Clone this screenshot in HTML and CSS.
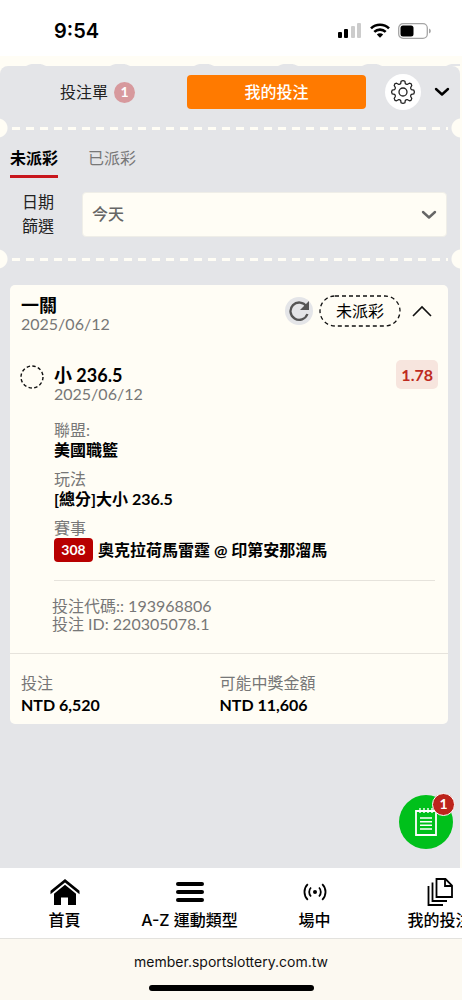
FILE: index.html
```html
<!DOCTYPE html>
<html lang="zh-Hant">
<head>
    <meta charset="UTF-8">
    <meta name="viewport" content="width=device-width, initial-scale=1.0">
    <title>我的投注</title>
    <link rel="stylesheet" href="styles.css">
</head>
<body>

<header class="status-bar">
    <span class="clock">9:54</span>
    <div class="status-icons">
        <svg width="24" height="16" viewBox="0 0 24 16">
            <rect x="0" y="9" width="4" height="6" rx="1"/>
            <rect x="6" y="6" width="4" height="9" rx="1"/>
            <rect x="13" y="3" width="4" height="12" rx="1" fill="#ccc"/>
            <rect x="19" y="0" width="4" height="15" rx="1" fill="#ccc"/>
        </svg>
        <svg width="20" height="16" viewBox="0 0 20 16">
            <g fill="none" stroke="#000" stroke-width="2.6">
                <path d="M1 5.4a13 13 0 0 1 18 0"/>
                <path d="M4.3 8.9a8.2 8.2 0 0 1 11.4 0"/>
            </g>
            <path d="M10 14.8 6.8 11.6a4.6 4.6 0 0 1 6.4 0z"/>
        </svg>
        <svg width="33" height="16" viewBox="0 0 33 16">
            <rect x=".7" y=".7" width="28.6" height="14.6" rx="4.4" fill="#fff" stroke="#a5a5a5" stroke-width="1.3"/>
            <rect x="2.5" y="2.5" width="13" height="11" rx="2.5"/>
            <path d="M31 5.5a2.6 2.6 0 0 1 0 5z" fill="#a5a5a5"/>
        </svg>
    </div>
</header>

<main class="page">
    <div class="panel">
        <div class="top-bar">
            <button type="button" class="top-tab">投注單 <span class="count">1</span></button>
            <button type="button" class="top-tab active">我的投注</button>
            <button type="button" class="icon-button settings" aria-label="設定">
                <svg width="26" height="26" viewBox="0 0 26 26" fill="none" stroke="#222" stroke-width="1.3" stroke-linejoin="round">
                    <path d="M11.1 2.2Q13 1 14.9 2.2L15.3 4.5Q16.2 5.6 17.5 5.3L19.5 4.2Q21.6 4.4 21.8 6.5L20.7 8.5Q20.4 9.8 21.5 10.7L23.8 11.1Q25 13 23.8 14.9L21.5 15.3Q20.4 16.2 20.7 17.5L21.8 19.5Q21.6 21.6 19.5 21.8L17.5 20.7Q16.2 20.4 15.3 21.5L14.9 23.8Q13 25 11.1 23.8L10.7 21.5Q9.8 20.4 8.5 20.7L6.5 21.8Q4.4 21.6 4.2 19.5L5.3 17.5Q5.6 16.2 4.5 15.3L2.2 14.9Q1 13 2.2 11.1L4.5 10.7Q5.6 9.8 5.3 8.5L4.2 6.5Q4.4 4.4 6.5 4.2L8.5 5.3Q9.8 5.6 10.7 4.5Z"/>
                    <circle cx="13" cy="13" r="4"/>
                </svg>
            </button>
            <button type="button" class="icon-button" aria-label="收合">
                <svg width="16" height="10" viewBox="0 0 16 10" fill="none" stroke="#000" stroke-width="2.4" stroke-linecap="round" stroke-linejoin="round">
                    <path d="M2 2l6 5.5L14 2"/>
                </svg>
            </button>
        </div>

        <div class="perforation"></div>

        <div class="tabs">
            <button type="button" class="tab active">未派彩</button>
            <button type="button" class="tab">已派彩</button>
        </div>

        <div class="filter">
            <label for="dateFilter">日期<br>篩選</label>
            <div class="select-box">
                <select id="dateFilter">
                    <option>今天</option>
                </select>
                <svg class="select-arrow" width="16" height="10" viewBox="0 0 16 10" fill="none" stroke="#666" stroke-width="2.4" stroke-linecap="round" stroke-linejoin="round">
                    <path d="M2 2l6 5.5L14 2"/>
                </svg>
            </div>
        </div>

        <div class="perforation"></div>

        <article class="bet-card">
            <div class="bet-header">
                <div class="bet-title">
                    <h2>一關</h2>
                    <p class="muted">2025/06/12</p>
                </div>
                <div class="bet-actions">
                    <button type="button" class="icon-button refresh" aria-label="重新整理">
                        <svg width="22" height="22" viewBox="0 0 22 22">
                            <path d="M18.5 6.5A8.7 8.7 0 1 0 19.4 14" fill="none" stroke="#555" stroke-width="2.3"/>
                            <path d="M21 1v9h-9z" fill="#555"/>
                        </svg>
                    </button>
                    <span class="bet-status">
                        <svg class="pill" width="82" height="32" viewBox="0 0 82 32">
                            <rect x="1" y="1" width="80" height="30" rx="15" fill="none" stroke="#111" stroke-width="1.3" stroke-dasharray="4 3"/>
                        </svg>
                        未派彩
                    </span>
                    <button type="button" class="icon-button" aria-label="收起">
                        <svg width="20" height="12" viewBox="0 0 20 12" fill="none" stroke="#111" stroke-width="1.6">
                            <path d="M1 11l9-9 9 9"/>
                        </svg>
                    </button>
                </div>
            </div>

            <div class="selection">
                <svg class="selection-dot" width="24" height="24" viewBox="0 0 24 24">
                    <circle cx="12" cy="12" r="11" fill="none" stroke="#111" stroke-width="1.4" stroke-dasharray="3.4 2.36"/>
                </svg>
                <div class="selection-body">
                    <div class="selection-head">
                        <div class="selection-name">
                            <h3>小 236.5</h3>
                            <p class="muted">2025/06/12</p>
                        </div>
                        <span class="odds">1.78</span>
                    </div>
                    <dl class="details">
                        <dt>聯盟:</dt>
                        <dd>美國職籃</dd>
                        <dt>玩法</dt>
                        <dd>[總分]大小 236.5</dd>
                        <dt>賽事</dt>
                        <dd class="match"><span class="match-code">308</span>奧克拉荷馬雷霆 @ 印第安那溜馬</dd>
                    </dl>
                </div>
            </div>

            <div class="bet-ids">
                <p>投注代碼:: 193968806</p>
                <p>投注 ID: 220305078.1</p>
            </div>

            <div class="totals">
                <div>
                    <p class="total-label">投注</p>
                    <p class="total-value">NTD 6,520</p>
                </div>
                <div>
                    <p class="total-label">可能中獎金額</p>
                    <p class="total-value">NTD 11,606</p>
                </div>
            </div>
        </article>
    </div>

    <button type="button" class="slip-button" aria-label="投注單">
        <svg width="24" height="30" viewBox="0 0 24 30" fill="none" stroke="#fff" stroke-width="1.8">
            <path d="M2 4h20v24H2z"/>
            <path d="M6 1v5M10 1v5M14 1v5M18 1v5" stroke-width="1.4"/>
            <path d="M6 11h12M6 14.7h12M6 18.3h12M6 22h12" stroke-width="1.6"/>
        </svg>
        <span class="slip-count">1</span>
    </button>
</main>

<nav class="bottom-nav">
    <a href="#" class="nav-item">
        <svg width="30" height="28" viewBox="0 0 30 28">
            <path d="M15 1 .5 12.8v3.4L15 4.6l14.5 11.6v-3.4z"/>
            <path d="M15 6.8 4 15.8V27h7v-7.5h7V27h8V15.8z"/>
        </svg>
        首頁
    </a>
    <a href="#" class="nav-item">
        <svg width="30" height="28" viewBox="0 0 30 28">
            <rect x="1" y="4" width="28" height="4" rx="2"/>
            <rect x="1" y="12" width="28" height="4" rx="2"/>
            <rect x="1" y="20" width="28" height="4" rx="2"/>
        </svg>
        A-Z 運動類型
    </a>
    <a href="#" class="nav-item">
        <svg width="30" height="28" viewBox="0 0 30 28" fill="none" stroke="#000" stroke-width="1.8">
            <circle cx="15" cy="14" r="2" fill="#000" stroke="none"/>
            <path d="M11 9.5a6.5 6.5 0 0 0 0 9M19 9.5a6.5 6.5 0 0 1 0 9M7.8 6.2a10.8 10.8 0 0 0 0 15.6M22.2 6.2a10.8 10.8 0 0 1 0 15.6"/>
        </svg>
        場中
    </a>
    <a href="#" class="nav-item">
        <svg width="30" height="28" viewBox="0 0 30 28" fill="none" stroke="#000" stroke-width="1.8">
            <path d="M11.5 1h9l6.5 6.5V19H11.5z"/>
            <path d="M20 1v7h7"/>
            <path d="M7.5 4.5V23H22M3.5 8v19H18"/>
        </svg>
        我的投注
    </a>
</nav>

<footer class="browser-bar">
    <span>member.sportslottery.com.tw</span>
    <div class="home-indicator"></div>
</footer>

</body>
</html>
```

FILE: styles.css
```css
* {
    box-sizing: border-box;
}
body {
    font-family: Lato, "Noto Sans CJK TC", sans-serif;
    font-size: 16px;
    line-height: 20px;
    margin: 0;
    min-height: 100vh;
    display: flex;
    flex-direction: column;
    color: #000;
    background-color: #fffdf5;
    overflow-x: hidden;
}
h2, h3, p, dl, dd {
    margin: 0;
}
button {
    font: inherit;
    color: inherit;
    padding: 0;
    border: none;
    background: none;
    cursor: pointer;
}
svg {
    display: block;
    flex: none;
}

/* status bar */
.status-bar {
    height: 56px;
    padding: 6px 31px 0 54px;
    display: flex;
    justify-content: space-between;
    align-items: center;
    background-color: white;
}
.clock {
    font-family: Inter, sans-serif;
    font-size: 20px;
    font-weight: 600;
}
.status-icons {
    display: flex;
    gap: 8px;
}

/* page */
.page {
    flex: 1;
    display: flex;
    position: relative;
    padding: 8px 2px 0 0;
}
.panel {
    flex: 1;
    min-width: 0;
    margin-top: 2px;
    border-radius: 8px 8px 0 0;
    background-color: #e4e5e8;
}
.page::before {
    content: "";
    position: absolute;
    top: 8px;
    left: 0;
    right: 2px;
    height: 2px;
    background: radial-gradient(circle at 36px 20px, #e4e5e8 20px, transparent 21px) 0 0 / 84px 40px repeat-x;
}
.top-bar {
    display: flex;
    align-items: center;
    padding: 8px 10px 8px 8px;
}
.top-tab {
    flex: 1;
    height: 34px;
    display: flex;
    justify-content: center;
    align-items: center;
    gap: 6px;
    color: #222;
}
.top-tab.active {
    border-radius: 4px;
    background-color: #ff7a00;
    color: white;
    font-weight: 500;
}
.count {
    width: 21px;
    height: 21px;
    border-radius: 50%;
    background-color: #d7999d;
    color: white;
    font-size: 14px;
    font-weight: bold;
}
.icon-button {
    display: flex;
    justify-content: center;
    align-items: center;
}
.settings {
    width: 36px;
    height: 36px;
    margin: 0 13px 0 19px;
    border-radius: 50%;
    background-color: white;
}

/* ticket edge: dashed line with a notch at both ends */
.perforation {
    height: 20px;
    background:
        radial-gradient(circle at -2px 10px, #fffdf5 9px, transparent 10px),
        radial-gradient(circle at calc(100% + 1px) 10px, #fffdf5 9px, transparent 10px),
        repeating-linear-gradient(90deg, #fffdf5 0 8px, transparent 8px 14px) 12px 9px / calc(100% - 24px) 3px no-repeat;
}

/* tabs and filter */
.tabs {
    display: flex;
    gap: 30px;
    padding: 8px 10px 0;
}
.tab {
    height: 32px;
    padding-bottom: 6px;
    border-bottom: 3px solid transparent;
    color: #777;
}
.tab.active {
    border-bottom-color: #c8161d;
    color: #000;
    font-weight: bold;
}
.filter {
    display: flex;
    align-items: center;
    gap: 28px;
    padding: 12px 13px 11px 22px;
}
.filter label {
    line-height: 24px;
    color: #222;
}
.select-box {
    flex: 1;
    position: relative;
}
.select-box select {
    width: 100%;
    height: 45px;
    padding: 0 9px;
    display: block;
    appearance: none;
    font: inherit;
    font-weight: 500;
    color: #666;
    border: 1px solid #efeee8;
    border-radius: 4px;
    background-color: #fffdf5;
}
.select-arrow {
    position: absolute;
    top: 18px;
    right: 10px;
    pointer-events: none;
}

/* bet card */
.bet-card {
    margin: 16px 12px 0 10px;
    border-radius: 5px;
    background-color: #fffdf5;
}
.muted {
    line-height: 18px;
    color: #777;
}
.bet-header {
    display: flex;
    align-items: flex-start;
    padding: 10px 16px 0 11px;
}
.bet-title {
    flex: 1;
}
.bet-actions {
    display: flex;
    align-items: center;
}
h2, h3 {
    font-size: 18px;
    line-height: 20px;
    font-weight: bold;
}
.refresh {
    width: 28px;
    height: 28px;
    margin-right: 6px;
    border-radius: 50%;
    background-color: #e4e5e8;
}
.bet-status {
    position: relative;
    width: 82px;
    height: 32px;
    margin-right: 11px;
    text-align: center;
    line-height: 32px;
}
.pill {
    position: absolute;
    top: 0;
    left: 0;
}
.selection {
    display: flex;
    gap: 10px;
    padding: 27px 13px 0 10px;
}
.selection-dot,
.selection-name {
    margin-top: 5px;
}
.selection-body {
    flex: 1;
    padding-bottom: 18px;
    border-bottom: 1px solid #e6e3dc;
}
.selection-head {
    display: flex;
    justify-content: space-between;
    align-items: flex-start;
}
.odds {
    height: 29px;
    padding: 0 5px;
    margin-right: -3px;
    border-radius: 5px;
    background-color: #f7e5de;
    color: #be2a20;
    font-weight: bold;
    line-height: 29px;
}
.details {
    padding-top: 17px;
}
.details dt {
    color: #777;
}
.details dd {
    margin-bottom: 9px;
    font-weight: bold;
}
.details .match {
    display: flex;
    align-items: center;
    gap: 5px;
    margin-bottom: 0;
    line-height: 24px;
}
.match-code {
    width: 39px;
    border-radius: 4px;
    background-color: #b80000;
    color: white;
    font-size: 14px;
    text-align: center;
}
.bet-ids {
    padding: 16px 12px 20px 42px;
    line-height: 18px;
    color: #777;
}
.totals {
    display: grid;
    grid-template-columns: 1fr 1fr;
    padding: 18px 30px 8px 11px;
    border-top: 1px solid #e6e3dc;
    line-height: 22px;
}
.total-label {
    color: #777;
}
.total-value {
    font-weight: bold;
}

/* floating slip button */
.slip-button {
    position: absolute;
    right: 9px;
    bottom: 19px;
    width: 54px;
    height: 54px;
    display: flex;
    justify-content: center;
    align-items: center;
    border-radius: 50%;
    background-color: #00c01b;
}
.slip-count {
    position: absolute;
    top: -2px;
    right: -2px;
    width: 23px;
    height: 23px;
    border: 1px solid white;
    border-radius: 50%;
    background-color: #bd241c;
    color: white;
    font-size: 14px;
    font-weight: bold;
}

/* bottom */
.bottom-nav {
    display: flex;
    height: 70px;
    padding-left: 2px;
    overflow-x: auto;
    scrollbar-width: none;
    background-color: white;
}
.nav-item {
    flex: 0 0 125px;
    display: flex;
    flex-direction: column;
    align-items: center;
    gap: 4px;
    padding-top: 10px;
    font-family: Inter, "Noto Sans CJK TC", sans-serif;
    font-weight: 500;
    color: #000;
    text-decoration: none;
}
.browser-bar {
    display: flex;
    flex-direction: column;
    align-items: center;
    gap: 13px;
    height: 62px;
    padding-top: 13px;
    border-top: 1px solid #e3e2de;
    background-color: #fcf9f1;
    font-family: Inter, sans-serif;
    font-size: 14px;
    color: #111;
}
.home-indicator {
    width: 165px;
    height: 6px;
    border-radius: 3px;
    background-color: black;
}
```
